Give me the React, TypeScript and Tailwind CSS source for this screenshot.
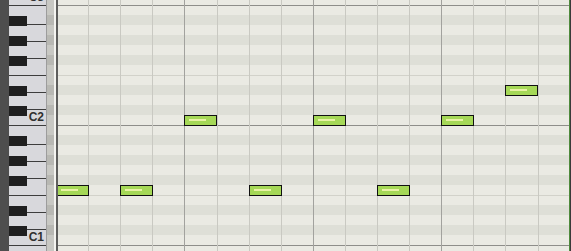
import React from 'react';

type Row = { name: string; black: boolean };

const NAMES = ['C', 'B', 'A#', 'A', 'G#', 'G', 'F#', 'F', 'E', 'D#', 'D', 'C#'];

// rows from top (C3 sits half out of view) down to B0
const buildRows = (): Row[] => {
  const rows: Row[] = [];
  for (let i = 0; i < 26; i++) {
    const n = NAMES[i % 12];
    rows.push({ name: n, black: n.includes('#') });
  }
  return rows;
};

const rows = buildRows();

// beat line offsets inside the grid (px)
const BEATS = [-2, 30, 62, 94, 126, 159, 191, 223, 255, 287, 319, 351, 383, 415, 447, 480, 512];

const notes = [
  { beat: 0, row: 19 },
  { beat: 2, row: 19 },
  { beat: 4, row: 12 },
  { beat: 6, row: 19 },
  { beat: 8, row: 12 },
  { beat: 10, row: 19 },
  { beat: 12, row: 12 },
  { beat: 14, row: 9 },
];

const Keyboard: React.FC = () => {
  const octaves = [5, 125, 245];
  const offsets = [0, 19, 36, 53, 70, 87, 104];
  return (
    <div className="relative w-[37px] h-full bg-[#d8d8dc] overflow-hidden">
      <svg width="37" height="251" className="absolute inset-0">
        {octaves.flatMap((o) =>
          offsets.map((d) => (
            <rect key={`${o}-${d}`} x="0" y={o + d} width="37" height="1" fill="#3d3d3d" />
          ))
        )}
        {rows.map((r, i) =>
          r.black ? <rect key={i} x="0" y={-5 + i * 10 + 1} width="18" height="10" fill="#1f1f1f" /> : null
        )}
      </svg>
      <span className="absolute right-[2px] top-[-9px] text-[12px] leading-none font-bold text-[#303030]">C3</span>
      <span className="absolute right-[2px] top-[111px] text-[12px] leading-none font-bold text-[#303030]">C2</span>
      <span className="absolute right-[2px] top-[231px] text-[12px] leading-none font-bold text-[#303030]">C1</span>
    </div>
  );
};

const App: React.FC = () => {
  return (
    <div
      className="flex w-[571px] h-[251px] overflow-hidden bg-[#eaeae3]"
      style={{ fontFamily: '"Liberation Sans", Arial, sans-serif' }}
    >
      <div className="w-[9px] h-full bg-[#4e4e4e]" />
      <Keyboard />
      <div className="w-px h-full bg-[#9c9c9c]" />

      {/* side strip next to the keys */}
      <div className="w-[7px] h-full overflow-hidden">
        <div className="-mt-[5px] flex flex-col">
          {rows.map((r, i) => (
            <div key={i} className={`h-[10px] ${r.black ? 'bg-[#b8b8b3]' : 'bg-[#c8c8c3]'}`} />
          ))}
        </div>
      </div>
      <div className="w-[2px] h-full bg-[#f4f4f0]" />
      <div className="w-[2px] h-full bg-[#5e5e5c]" />

      {/* grid */}
      <div className="relative w-[511px] h-full overflow-hidden">
        <div className="-mt-[5px] flex flex-col">
          {rows.map((r, i) => (
            <div
              key={i}
              className={`h-[10px] ${r.black ? 'bg-[#dedfd7]' : 'bg-[#eaeae3]'} ${
                r.name === 'B' ? 'border-t border-[#8e8e8a]' : r.name === 'E' ? 'border-t border-[#d2d2ca]' : ''
              }`}
            />
          ))}
        </div>
        <div className="absolute top-0 bottom-0 left-[-2px] flex">
          {BEATS.slice(0, -1).map((b, k) => (
            <div
              key={k}
              className={`h-full shrink-0 border-l ${k % 4 === 0 ? 'border-[#a2a29e]' : 'border-[#c9c9c2]'}`}
              style={{ width: BEATS[k + 1] - b }}
            />
          ))}
        </div>
        {notes.map((n, i) => (
          <div
            key={i}
            className="absolute h-[11px] w-[33px] bg-[#a5d857] border border-[#111]"
            style={{ left: BEATS[n.beat], top: -5 + n.row * 10 }}
          >
            <div className="absolute left-[4px] top-[3px] w-[17px] h-[2px] bg-[#e8f2a4]" />
          </div>
        ))}
      </div>
      <div className="w-px h-full bg-[#4e8a3c]" />
      <div className="w-px h-full bg-[#3a3a3a]" />
    </div>
  );
};

export default App;
